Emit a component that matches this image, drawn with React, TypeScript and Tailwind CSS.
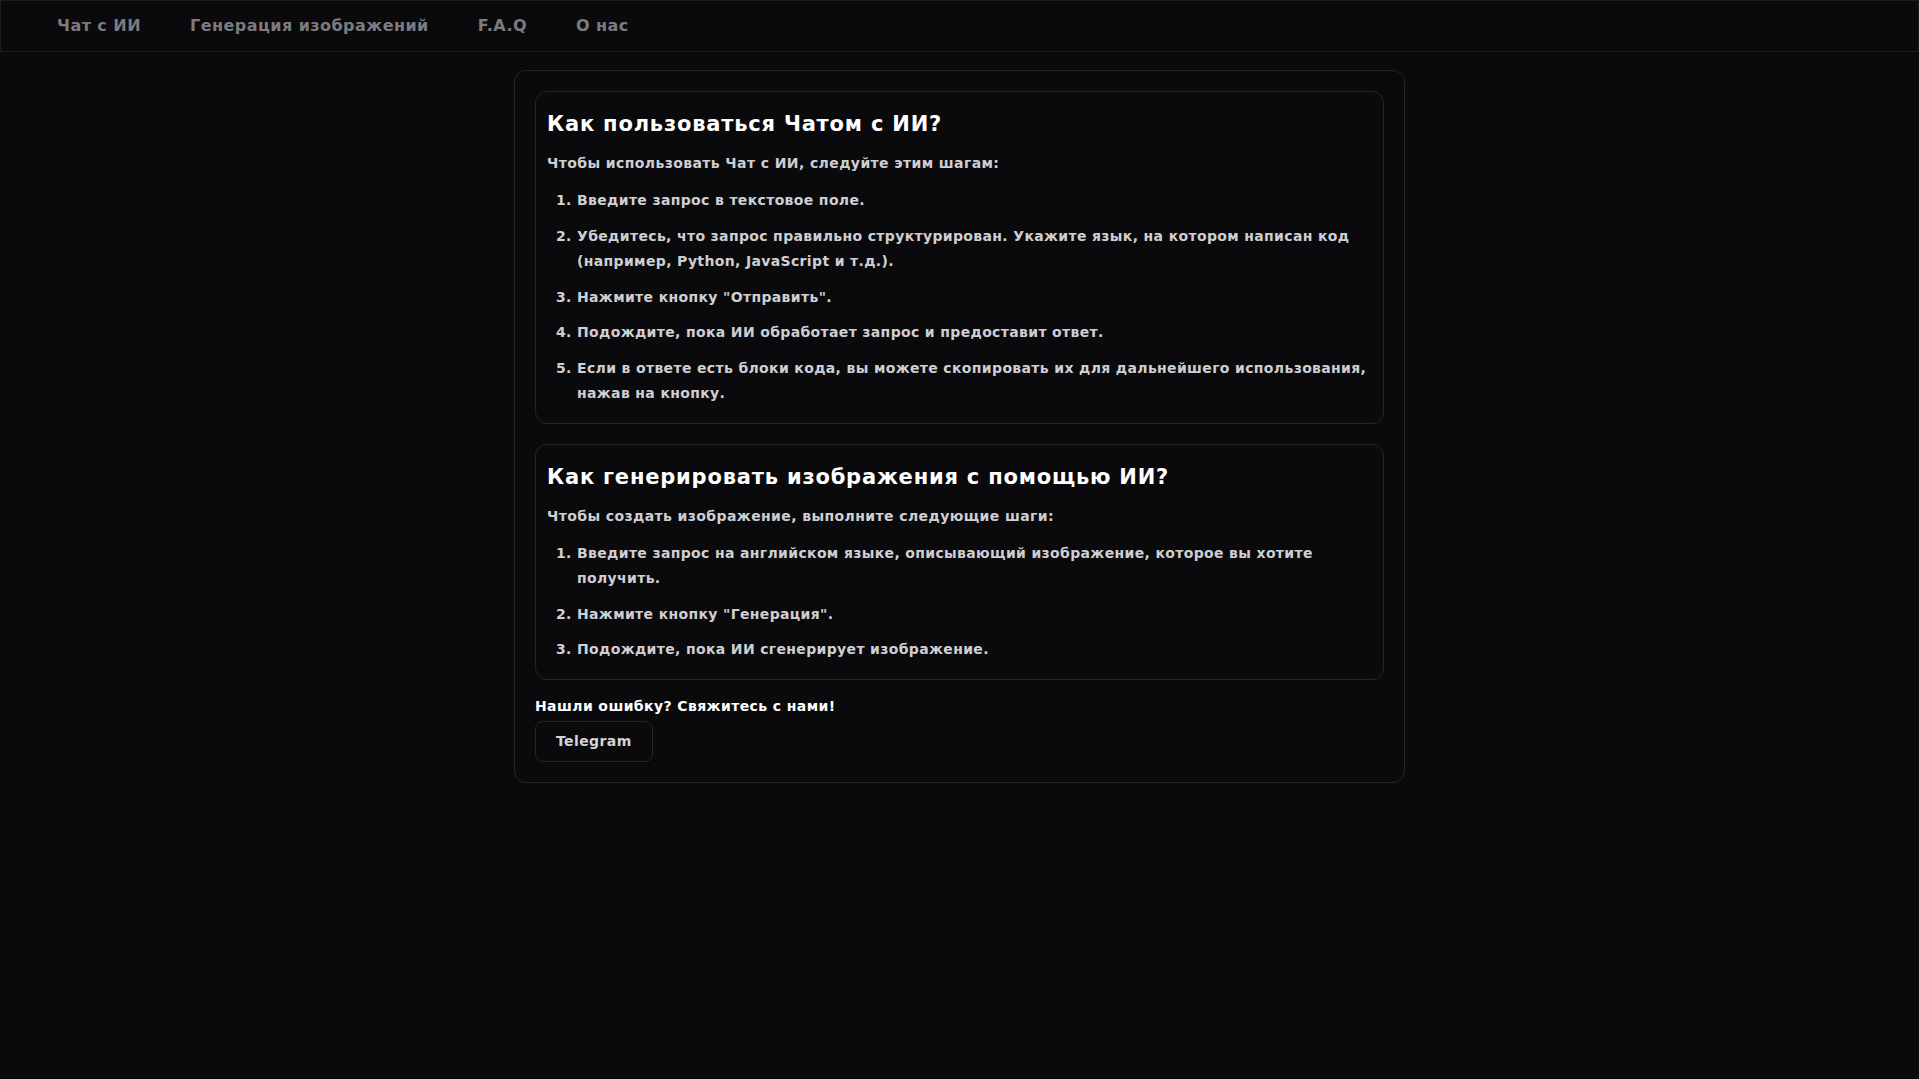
import * as React from "react";

type Section = {
    title: string;
    intro: string;
    steps: string[];
}

const sections: Section[] = [
    {
        title: "Как пользоваться Чатом с ИИ?",
        intro: "Чтобы использовать Чат с ИИ, следуйте этим шагам:",
        steps: [
            "Введите запрос в текстовое поле.",
            "Убедитесь, что запрос правильно структурирован. Укажите язык, на котором написан код (например, Python, JavaScript и т.д.).",
            "Нажмите кнопку \"Отправить\".",
            "Подождите, пока ИИ обработает запрос и предоставит ответ.",
            "Если в ответе есть блоки кода, вы можете скопировать их для дальнейшего использования, нажав на кнопку.",
        ],
    },
    {
        title: "Как генерировать изображения с помощью ИИ?",
        intro: "Чтобы создать изображение, выполните следующие шаги:",
        steps: [
            "Введите запрос на английском языке, описывающий изображение, которое вы хотите получить.",
            "Нажмите кнопку \"Генерация\".",
            "Подождите, пока ИИ сгенерирует изображение.",
        ],
    },
];

const navLinks = ["Чат с ИИ", "Генерация изображений", "F.A.Q", "О нас"];

function NavBar() {
    return (
        <nav className="h-[52px] border border-[#1c1c1f] bg-[#0a0a0c] flex flex-row items-center pl-[56px] gap-[49px]">
            {navLinks.map((link) => (
                <a key={link} href="#" className="text-[16px] font-bold text-[#7b7b80] tracking-[0.45px]">{link}</a>
            ))}
        </nav>
    )
}

function SectionCard({title, intro, steps}: Section) {
    return (
        <div className="border border-[#252528] rounded-xl px-[11px] pt-[18px] pb-[16px]">
            <h2 className="text-[21px] leading-[28px] font-bold text-white tracking-[0.8px]">{title}</h2>
            <p className="mt-3 text-[14px] leading-[26px] font-bold text-[#cfcfd3] tracking-[0.4px]">{intro}</p>
            <ol className="mt-[12px] list-decimal pl-[30px] flex flex-col gap-[10px] text-[14px] leading-[25.5px] font-bold text-[#cfcfd3] tracking-[0.35px]">
                {steps.map((step, i) => (
                    <li key={i}>{step}</li>
                ))}
            </ol>
        </div>
    )
}

export default function App() {
    return (
        <div className="min-h-screen bg-[#0a0a0c] font-['DejaVu_Sans',sans-serif]">
            <NavBar/>
            <main className="flex justify-center pt-[18px]">
                <div className="w-[891px] border border-[#252528] rounded-xl p-5 flex flex-col">
                    <div className="flex flex-col gap-5">
                        {sections.map((section) => (
                            <SectionCard key={section.title} {...section}/>
                        ))}
                    </div>
                    <p className="mt-[14px] text-[14px] leading-6 font-bold text-white tracking-[0.4px]">Нашли ошибку? Свяжитесь с нами!</p>
                    <div className="mt-[3px]">
                        <button className="h-[41px] px-5 border border-[#252528] rounded-lg text-[14px] font-bold text-[#d4d4d8] tracking-[0.4px]">Telegram</button>
                    </div>
                </div>
            </main>
        </div>
    )
}
